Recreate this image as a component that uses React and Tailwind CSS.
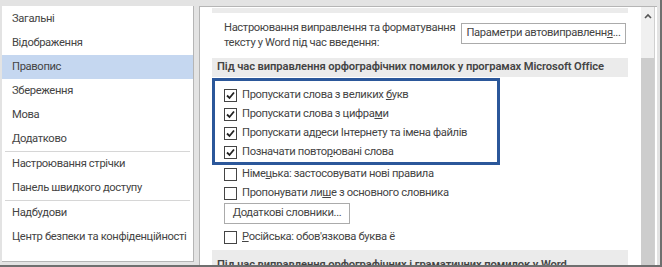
import React from 'react';

const navGroups = [
  ['Загальні', 'Відображення', 'Правопис', 'Збереження', 'Мова', 'Додатково'],
  ['Настроювання стрічки', 'Панель швидкого доступу'],
  ['Надбудови', 'Центр безпеки та конфіденційності'],
];

function Check({ checked }) {
  return (
    <span className="w-[13px] h-[13px] border border-[#444] bg-white flex items-center justify-center shrink-0">
      {checked && (
        <svg width="9" height="9" viewBox="0 0 9 9">
          <path d="M1 4.5 L3.5 7 L8 1.5" fill="none" stroke="#222" strokeWidth="1.8" />
        </svg>
      )}
    </span>
  );
}

function Row({ checked, children }) {
  return (
    <div className="flex items-center gap-[5px] h-[19px] whitespace-nowrap">
      <Check checked={checked} />
      <span>{children}</span>
    </div>
  );
}

export default function App() {
  return (
    <div
      className="w-[662px] h-[267px] overflow-hidden bg-[#e3e3e3] flex pt-[6px] pl-[2px] border-r-2 border-b-2 border-[#6f6f6f] text-[11.2px] tracking-[-0.35px] text-[#444] whitespace-nowrap"
      style={{ fontFamily: 'Roboto, sans-serif' }}
    >
      {/* Left nav */}
      <div className="w-[192px] h-[256px] bg-white border-r border-b border-[#b5b5b5] pt-[1px]">
        {navGroups.map((group, gi) => (
          <div key={gi} className={gi > 0 ? 'border-t border-[#d6d6d6] mx-[3px]' : 'mx-[3px]'}>
            {group.map((item) => (
              <div
                key={item}
                className={`h-[24px] flex items-center pl-[10px] -mx-[3px] ${item === 'Правопис' ? 'bg-[#c5d7f0]' : ''}`}
              >
                {item}
              </div>
            ))}
          </div>
        ))}
      </div>

      {/* Right pane */}
      <div className="ml-[5px] w-[458px] h-[261px] overflow-hidden bg-white border-l border-t border-[#b5b5b5] flex">
        <div className="w-[441px] pl-[12px] pt-[1px]">
          <div className="h-[5px] w-[416px] bg-[#ebebeb]" />
          <div className="flex items-start mt-[7px]">
            <div className="pl-[12px] w-[249px] leading-[15px]">
              <div>Настроювання виправлення та форматування</div>
              <div>тексту у Word під час введення:</div>
            </div>
            <button className="w-[165px] h-[21px] mt-[3px] border border-[#ababab] bg-white text-[#444] flex items-center justify-center">
              Параметри автовиправленн<span className="underline">я</span>...
            </button>
          </div>
          <div className="h-[19px] w-[416px] bg-[#ebebeb] mt-[8px] pl-[5px] flex items-center font-semibold tracking-[-0.1px]">
            Під час виправлення орфографічних помилок у програмах Microsoft Office
          </div>
          <div className="w-[288px] border-[3px] border-[#2b579a] pl-[9px] pt-[5px] mt-[1px]">
            <Row checked>Пропускати слова з великих <span className="underline">б</span>укв</Row>
            <Row checked>Пропускати слова з цифра<span className="underline">м</span>и</Row>
            <Row checked>Пропускати ад<span className="underline">р</span>еси Інтернету та імена файлів</Row>
            <Row checked>Позначати повто<span className="underline">р</span>ювані слова</Row>
          </div>
          <div className="pl-[12px]">
            <Row>Німе<span className="underline">ц</span>ька: застосовувати нові правила</Row>
            <Row>Пропонувати ли<span className="underline">ш</span>е з основного словника</Row>
            <button className="w-[126px] h-[21px] mb-[4px] border border-[#ababab] bg-white text-[#444] flex items-center justify-center">
              <span className="underline">Д</span>одаткові словники...
            </button>
            <Row><span className="underline">Р</span>осійська: обов'язкова буква ё</Row>
          </div>
          <div className="h-[24px] w-[416px] bg-[#ebebeb] mt-[3px] pl-[5px] pt-[6px] flex items-center font-semibold tracking-[-0.1px]">
            Під час виправлення орфографічних і граматичних помилок у Word
          </div>
        </div>
        {/* Scrollbar */}
        <div className="w-[14px] flex flex-col border-r border-[#d0d0d0]">
          <div className="h-[51px] bg-[#f0f0f0] flex justify-center pt-[6px]">
            <svg width="8" height="6" viewBox="0 0 8 6">
              <path d="M1 5 L4 2 L7 5" fill="none" stroke="#555" strokeWidth="1.6" />
            </svg>
          </div>
          <div className="flex-1 bg-[#cdcdcd]" />
        </div>
      </div>
    </div>
  );
}
